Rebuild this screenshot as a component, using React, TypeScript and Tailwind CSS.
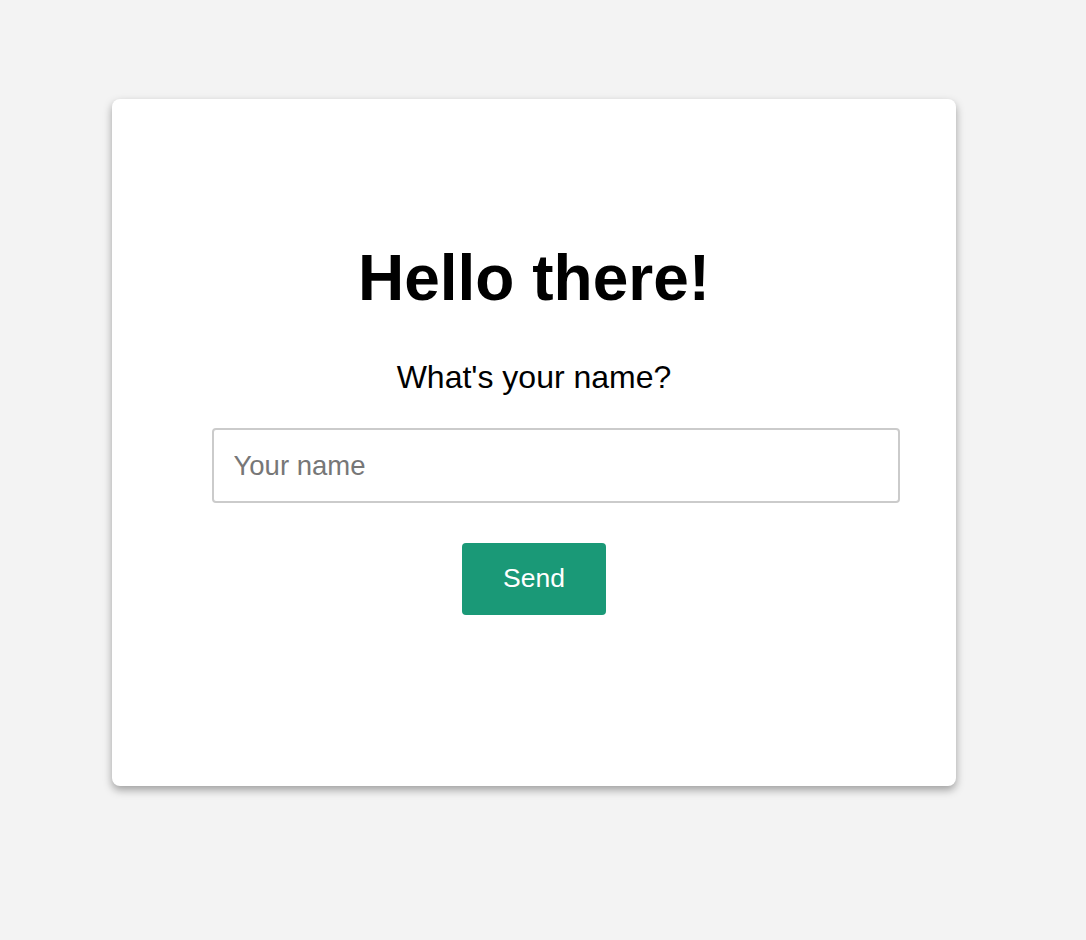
export default function App() {
  return (
    <div className="min-h-[940px] bg-[#f3f3f3] pt-[99px] pl-[112px] font-['Liberation_Sans',Arial,sans-serif]">
      <div className="flex h-[687px] w-[844px] flex-col items-center rounded-lg bg-white pt-[147px] shadow-[0_4px_8px_rgba(0,0,0,0.35)]">
        <h1 className="text-[64px] font-bold leading-none text-black">Hello there!</h1>
        <p className="mt-[51px] text-[32px] leading-none text-black">What's your name?</p>
        <input
          type="text"
          placeholder="Your name"
          className="mt-[35px] ml-[43px] h-[75px] w-[688px] rounded-[4px] border-2 border-[#cbcbcb] px-[20px] text-[27.5px] text-black placeholder:text-[#777] focus:outline-none"
        />
        <button className="mt-[40px] h-[72px] w-[144px] rounded-[4px] bg-[#1a9977] text-[26.5px] text-white">
          Send
        </button>
      </div>
    </div>
  );
}
